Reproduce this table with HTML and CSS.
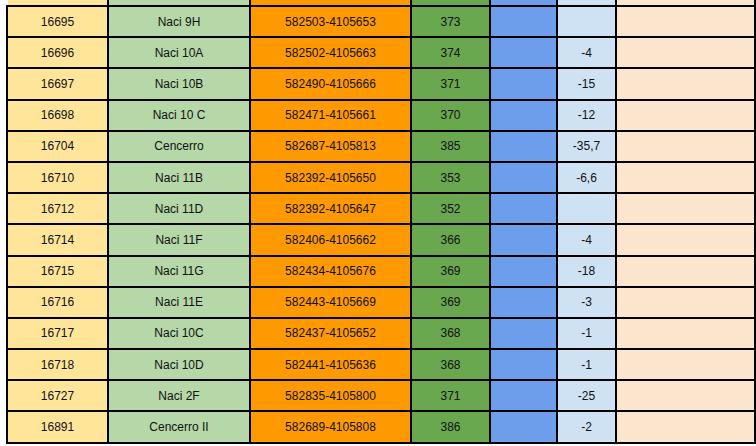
FILE: index.html
```html
<!DOCTYPE html>
<html>
<head>
<meta charset="utf-8">
<link rel="stylesheet" href="styles.css">
</head>
<body>
<div class="sheet">
  <div class="strip">
    <div class="c1"></div><div class="c2"></div><div class="c3"></div><div class="c4"></div><div class="c5"></div><div class="c6"></div><div class="c7"></div>
  </div>
  <div class="grid">
    <div class="c1">16695</div><div class="c2">Naci 9H</div><div class="c3">582503-4105653</div><div class="c4">373</div><div class="c5"></div><div class="c6"></div><div class="c7"></div>
    <div class="c1">16696</div><div class="c2">Naci 10A</div><div class="c3">582502-4105663</div><div class="c4">374</div><div class="c5"></div><div class="c6">-4</div><div class="c7"></div>
    <div class="c1">16697</div><div class="c2">Naci 10B</div><div class="c3">582490-4105666</div><div class="c4">371</div><div class="c5"></div><div class="c6">-15</div><div class="c7"></div>
    <div class="c1">16698</div><div class="c2">Naci 10 C</div><div class="c3">582471-4105661</div><div class="c4">370</div><div class="c5"></div><div class="c6">-12</div><div class="c7"></div>
    <div class="c1">16704</div><div class="c2">Cencerro</div><div class="c3">582687-4105813</div><div class="c4">385</div><div class="c5"></div><div class="c6">-35,7</div><div class="c7"></div>
    <div class="c1">16710</div><div class="c2">Naci 11B</div><div class="c3">582392-4105650</div><div class="c4">353</div><div class="c5"></div><div class="c6">-6,6</div><div class="c7"></div>
    <div class="c1">16712</div><div class="c2">Naci 11D</div><div class="c3">582392-4105647</div><div class="c4">352</div><div class="c5"></div><div class="c6"></div><div class="c7"></div>
    <div class="c1">16714</div><div class="c2">Naci 11F</div><div class="c3">582406-4105662</div><div class="c4">366</div><div class="c5"></div><div class="c6">-4</div><div class="c7"></div>
    <div class="c1">16715</div><div class="c2">Naci 11G</div><div class="c3">582434-4105676</div><div class="c4">369</div><div class="c5"></div><div class="c6">-18</div><div class="c7"></div>
    <div class="c1">16716</div><div class="c2">Naci 11E</div><div class="c3">582443-4105669</div><div class="c4">369</div><div class="c5"></div><div class="c6">-3</div><div class="c7"></div>
    <div class="c1">16717</div><div class="c2">Naci 10C</div><div class="c3">582437-4105652</div><div class="c4">368</div><div class="c5"></div><div class="c6">-1</div><div class="c7"></div>
    <div class="c1">16718</div><div class="c2">Naci 10D</div><div class="c3">582441-4105636</div><div class="c4">368</div><div class="c5"></div><div class="c6">-1</div><div class="c7"></div>
    <div class="c1">16727</div><div class="c2">Naci 2F</div><div class="c3">582835-4105800</div><div class="c4">371</div><div class="c5"></div><div class="c6">-25</div><div class="c7"></div>
    <div class="c1">16891</div><div class="c2">Cencerro II</div><div class="c3">582689-4105808</div><div class="c4">386</div><div class="c5"></div><div class="c6">-2</div><div class="c7"></div>
  </div>
</div>
</body>
</html>
```

FILE: styles.css
```css
html, body {
  margin: 0;
  padding: 0;
  background: #fff;
}
body {
  font-family: "Liberation Sans", Arial, sans-serif;
  font-size: 12px;
  color: #111;
}
.sheet {
  padding-left: 6px;
}
.strip {
  display: grid;
  grid-template-columns: 99px 140px 159px 77px 65px 57px 137px;
  column-gap: 2px;
  height: 5px;
  margin-left: 2px;
  width: 748px;
  background: #000;
}
.grid {
  display: grid;
  grid-template-columns: 99px 140px 159px 77px 65px 57px 137px;
  grid-auto-rows: 29.2px;
  gap: 2px;
  padding: 2px;
  width: 746px;
  background: #000;
}
.grid > div {
  display: flex;
  align-items: center;
  justify-content: center;
  white-space: nowrap;
}
.c1 { background: #ffe599; }
.c2 { background: #b6d7a8; }
.c3 { background: #ff9900; }
.c4 { background: #6aa84f; }
.c5 { background: #6d9eeb; }
.c6 { background: #cfe2f3; }
.c7 { background: #fce5cd; }
```
